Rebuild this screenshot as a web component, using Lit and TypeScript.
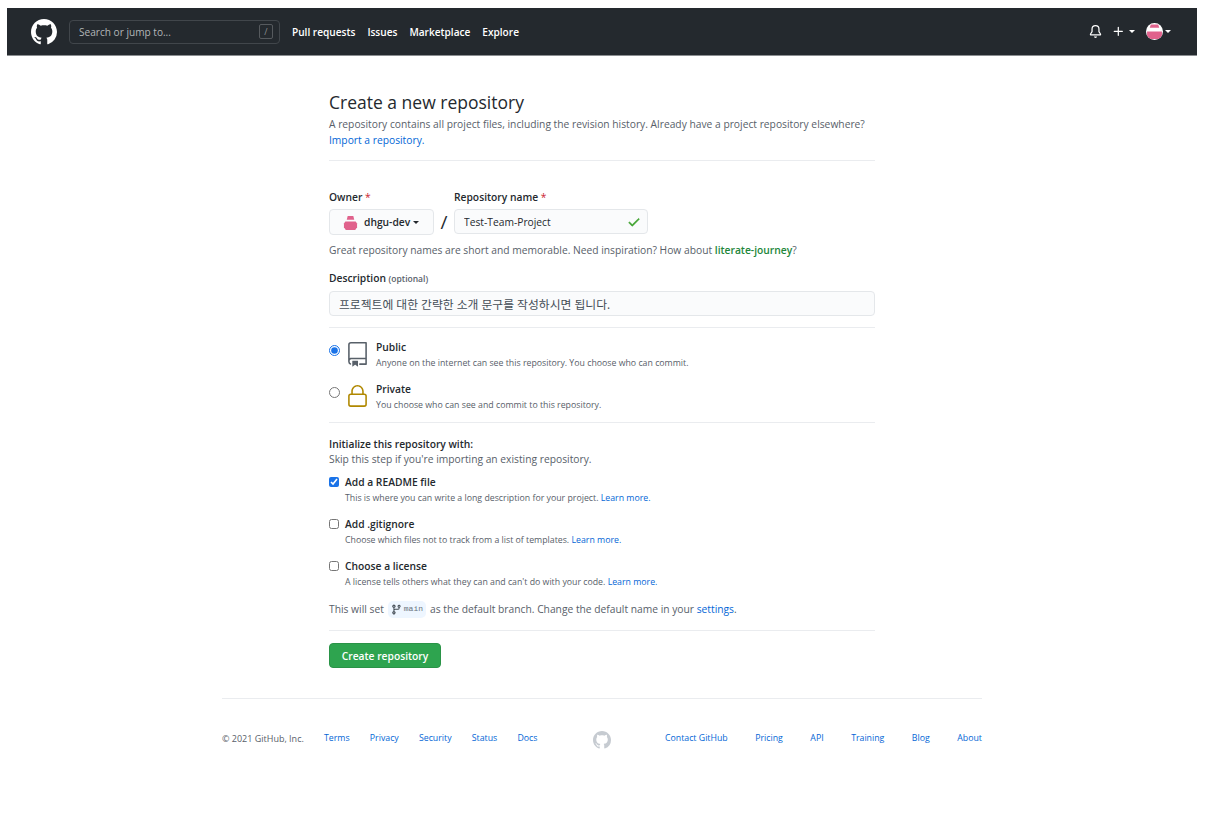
import { LitElement, html, css, svg } from "lit";
import { customElement } from "lit/decorators.js";

const MARK =
  "M8 0C3.58 0 0 3.58 0 8c0 3.54 2.29 6.53 5.47 7.59.4.07.55-.17.55-.38 0-.19-.01-.82-.01-1.49-2.01.37-2.53-.49-2.69-.94-.09-.23-.48-.94-.82-1.13-.28-.15-.68-.52-.01-.53.63-.01 1.08.58 1.23.82.72 1.21 1.87.87 2.33.66.07-.52.28-.87.51-1.07-1.78-.2-3.64-.89-3.64-3.95 0-.87.31-1.59.82-2.15-.08-.2-.36-1.02.08-2.12 0 0 .67-.21 2.2.82.64-.18 1.32-.27 2-.27.68 0 1.36.09 2 .27 1.53-1.04 2.2-.82 2.2-.82.44 1.1.16 1.92.08 2.12.51.56.82 1.27.82 2.15 0 3.07-1.87 3.75-3.65 3.95.29.25.54.73.54 1.48 0 1.07-.01 1.93-.01 2.2 0 .21.15.46.55.38A8.013 8.013 0 0016 8c0-4.42-3.58-8-8-8z";

const icon = (size: number, box: number, paths: string[], cls = "") => html`<svg
  class=${cls}
  width=${size}
  height=${size}
  viewBox="0 0 ${box} ${box}"
  fill="currentColor"
>
  ${paths.map((d) => svg`<path fill-rule="evenodd" d=${d}></path>`)}
</svg>`;

// the org's pink identicon, round in the header and bare next to the owner name
const headerAvatar = html`<svg class="round" width="17" height="17" viewBox="0 0 16 16">
  <rect width="16" height="16" fill="#fff"></rect>
  <path d="M4.5 1.5h7l1 3h-9z" fill="#e0628c"></path>
  <path d="M1 8h14v4l-2.5 3h-9L1 12z" fill="#e0628c"></path>
</svg>`;

const ownerAvatar = html`<svg width="15" height="15" viewBox="0 0 16 16">
  <path d="M5 1h6l1 4H4z" fill="#e0628c"></path>
  <path d="M2.5 7h11L15 9v4l-2 3H3l-2-3V9z" fill="#e0628c"></path>
</svg>`;

@customElement("app-root")
export class AppRoot extends LitElement {
  static styles = css`
    :host {
      display: block;
      padding: 8px 15px 0 7px;
      background: #fff;
      color: #24292e;
      font-family: "Open Sans", "Noto Sans CJK KR", sans-serif;
      font-size: 10.27px;
    }
    a {
      color: #0366d6;
      text-decoration: none;
    }
    svg {
      display: block;
      flex: none;
    }
    .round {
      border-radius: 50%;
    }

    .header {
      display: flex;
      align-items: center;
      height: 47px;
      padding: 0 24px;
      background: #24292e;
      border-bottom: 1px solid #8b8e91;
      color: #fff;
      font-size: 10.1px;
    }
    .search {
      display: flex;
      align-items: center;
      justify-content: space-between;
      box-sizing: border-box;
      width: 211px;
      height: 24px;
      margin: 0 12px;
      padding: 0 6px 0 9px;
      border: 1px solid #41464b;
      border-radius: 4px;
      color: #b3b6b8;
    }
    .slash {
      display: flex;
      align-items: center;
      justify-content: center;
      box-sizing: border-box;
      width: 14px;
      height: 15px;
      border: 1px solid #565a5e;
      border-radius: 2px;
      font-size: 9px;
      color: #8b8e91;
    }
    .nav {
      display: flex;
      gap: 12px;
      font-weight: 600;
    }
    .actions {
      display: flex;
      align-items: center;
      margin-left: auto;
      margin-right: 2px;
    }
    .caret {
      width: 0;
      height: 0;
      border: 3px solid transparent;
      border-top-color: currentColor;
      border-bottom-width: 0;
    }
    .plus {
      margin: 0 4px 0 10px;
    }
    .me {
      margin: 0 2px 0 11px;
    }

    .wrap {
      display: flex;
      flex-direction: column;
      align-items: center;
    }
    .main {
      width: 546px;
      padding-top: 34px;
    }
    h1 {
      margin: 0;
      font-size: 17.5px;
      line-height: 24px;
      font-weight: 400;
    }
    .muted {
      color: #586069;
    }
    .intro {
      margin: 2px 0 0;
      line-height: 16px;
    }
    hr {
      height: 1px;
      margin: 0;
      border: 0;
      background: #eaecef;
    }
    .intro + hr {
      margin-top: 12px;
    }
    .names {
      display: flex;
      align-items: flex-start;
      margin-top: 28px;
    }
    .label {
      display: block;
      font-weight: 600;
      line-height: 16px;
    }
    .req {
      color: #cb2431;
      font-weight: 400;
    }
    .field {
      display: flex;
      align-items: center;
      box-sizing: border-box;
      height: 25px;
      padding: 0 6px 0 9px;
      background: #fafbfc;
      border: 1px solid #e4e7ea;
      border-radius: 4px;
    }
    .field input {
      flex: 1;
      min-width: 0;
      padding: 0;
      border: 0;
      outline: 0;
      background: none;
      color: #24292e;
      font: inherit;
    }
    .desc .field input {
      font-size: 11.8px;
      color: #444d56;
    }
    .owner {
      display: flex;
      align-items: center;
      box-sizing: border-box;
      width: 105px;
      height: 26px;
      margin-top: 4px;
      padding-left: 13px;
      background: #fafbfc;
      border: 1px solid #e4e7ea;
      border-radius: 4px;
      font-weight: 600;
    }
    .owner span {
      margin: 0 3px 0 6px;
    }
    .sep {
      width: 20px;
      margin-top: 20px;
      font-size: 19px;
      line-height: 26px;
      text-align: center;
    }
    .repo .field {
      width: 194px;
      margin-top: 4px;
    }
    .ok {
      color: #3fa32f;
      stroke: currentColor;
      stroke-width: 0.6;
    }
    .hint {
      margin: 7px 0 0;
      line-height: 16px;
    }
    .hint b {
      color: #22863a;
      font-weight: 600;
    }
    .desc {
      margin-top: 12px;
    }
    .desc small {
      font-size: 8.5px;
      color: #586069;
    }
    .desc .field {
      margin-top: 4px;
    }
    .desc + hr {
      margin-top: 11px;
    }
    .vis {
      display: flex;
      align-items: flex-start;
      height: 34px;
      margin-top: 8px;
    }
    .vis.first {
      margin-top: 11px;
    }
    .vis input {
      width: 11px;
      height: 11px;
      margin: 6px 5px 0 0;
      accent-color: #1a73e8;
    }
    .vis svg {
      margin: 3px 6px 0 0;
      color: #586069;
    }
    .vis svg.gold {
      color: #b08800;
    }
    .vis + hr {
      margin-top: 7px;
    }
    .name {
      font-weight: 600;
      line-height: 16px;
    }
    .sub {
      margin-top: 1px;
      font-size: 8.78px;
      line-height: 14px;
      color: #586069;
    }
    .init {
      margin-top: 13px;
      font-weight: 600;
      line-height: 16px;
    }
    .opt {
      display: flex;
      align-items: flex-start;
      height: 31px;
      margin-top: 11px;
    }
    .opt.first {
      margin-top: 8px;
    }
    .opt input {
      width: 10px;
      height: 10px;
      margin: 3px 6px 0 0;
      accent-color: #1a73e8;
    }
    .branch {
      display: flex;
      align-items: center;
      height: 16px;
      margin-top: 12px;
      line-height: 16px;
    }
    .chip {
      display: flex;
      align-items: center;
      gap: 2px;
      margin: 0 4px;
      padding: 0 3px;
      height: 17px;
      background: #eef6ff;
      border-radius: 5px;
      color: #6a737d;
      font-family: "Liberation Mono", monospace;
      font-size: 8px;
    }
    .chip svg {
      color: #444d56;
    }
    .branch + hr {
      margin-top: 13px;
    }
    .create {
      display: flex;
      align-items: center;
      justify-content: center;
      box-sizing: border-box;
      width: 112px;
      height: 25px;
      margin-top: 12px;
      background: #2ea44f;
      border: 1px solid #2a9347;
      border-radius: 4px;
      color: #fff;
      font-weight: 600;
    }

    .footer {
      width: 760px;
      margin-top: 30px;
      border-top: 1px solid #eaecef;
      padding: 30px 0 64px;
      font-size: 8.78px;
    }
    .links {
      display: flex;
      align-items: center;
      height: 18px;
    }
    .left {
      display: flex;
      gap: 20.2px;
      width: 371px;
    }
    .copy {
      font-size: 9px;
      color: #586069;
    }
    .logo {
      margin-top: 4px;
      color: #c6cbd1;
    }
    .right {
      display: flex;
      justify-content: space-between;
      margin-left: auto;
      width: 317px;
    }
  `;

  render() {
    return html`
      <div class="header">
        ${icon(26, 16, [MARK])}
        <div class="search">
          <span>Search or jump to...</span>
          <span class="slash">/</span>
        </div>
        <nav class="nav">
          <span>Pull requests</span><span>Issues</span><span>Marketplace</span><span>Explore</span>
        </nav>
        <div class="actions">
          ${icon(13, 16, [
            "M8 16a2 2 0 001.985-1.75c.017-.137-.097-.25-.235-.25h-3.5c-.138 0-.252.113-.235.25A2 2 0 008 16z",
            "M8 1.5A3.5 3.5 0 004.5 5v2.947c0 .346-.102.683-.294.97l-1.703 2.556a.018.018 0 00-.003.01l.001.006c0 .002.002.004.004.006a.017.017 0 00.006.004l.007.001h10.964l.007-.001a.018.018 0 00.006-.004.016.016 0 00.004-.006l.001-.007a.017.017 0 00-.003-.01l-1.703-2.554a1.75 1.75 0 01-.294-.97V5A3.5 3.5 0 008 1.5zM3 5a5 5 0 0110 0v2.947c0 .05.015.098.042.139l1.703 2.555A1.518 1.518 0 0113.482 13H2.518a1.518 1.518 0 01-1.263-2.36l1.703-2.554A.25.25 0 003 7.947V5z",
          ])}
          ${icon(13, 16, [
            "M7.75 2a.75.75 0 01.75.75V7h4.25a.75.75 0 110 1.5H8.5v4.25a.75.75 0 11-1.5 0V8.5H2.75a.75.75 0 010-1.5H7V2.75A.75.75 0 017.75 2z",
          ], "plus")}
          <div class="caret"></div>
          <div class="me">${headerAvatar}</div>
          <div class="caret"></div>
        </div>
      </div>

      <div class="wrap">
        <main class="main">
          <h1>Create a new repository</h1>
          <p class="intro muted">
            A repository contains all project files, including the revision history. Already have a
            project repository elsewhere?<br />
            <a href="#">Import a repository.</a>
          </p>
          <hr />

          <div class="names">
            <div>
              <span class="label">Owner <span class="req">*</span></span>
              <div class="owner">${ownerAvatar}<span>dhgu-dev</span><div class="caret"></div></div>
            </div>
            <div class="sep">/</div>
            <div class="repo">
              <span class="label">Repository name <span class="req">*</span></span>
              <div class="field">
                <input value="Test-Team-Project" />
                ${icon(14, 16, [
                  "M13.78 4.22a.75.75 0 010 1.06l-7.25 7.25a.75.75 0 01-1.06 0L2.22 9.28a.75.75 0 011.06-1.06L6 10.94l6.72-6.72a.75.75 0 011.06 0z",
                ], "ok")}
              </div>
            </div>
          </div>
          <p class="hint muted">
            Great repository names are short and memorable. Need inspiration? How about
            <b>literate-journey</b>?
          </p>

          <div class="desc">
            <span class="label">Description <small>(optional)</small></span>
            <div class="field"><input value="프로젝트에 대한 간략한 소개 문구를 작성하시면 됩니다." /></div>
          </div>
          <hr />

          <div class="vis first">
            <input type="radio" name="vis" checked />
            ${icon(25, 24, [
              "M3 2.75A2.75 2.75 0 015.75 0h14.5a.75.75 0 01.75.75v20.5a.75.75 0 01-.75.75h-6a.75.75 0 010-1.5h5.25v-4H6A1.5 1.5 0 004.5 18v.75c0 .716.43 1.334 1.05 1.605a.75.75 0 01-.6 1.374A3.25 3.25 0 013 18.75v-16zM19.5 1.5V15H6c-.546 0-1.059.146-1.5.401V2.75c0-.69.56-1.25 1.25-1.25H19.5z",
              "M7 18.25a.25.25 0 01.25-.25h5a.25.25 0 01.25.25v5.01a.25.25 0 01-.397.201l-2.206-1.604a.25.25 0 00-.294 0L7.397 23.46a.25.25 0 01-.397-.2v-5.01z",
            ])}
            <div>
              <div class="name">Public</div>
              <div class="sub">Anyone on the internet can see this repository. You choose who can commit.</div>
            </div>
          </div>
          <div class="vis">
            <input type="radio" name="vis" />
            ${icon(25, 24, [
              "M6 9V7.25C6 3.845 8.503 1 12 1s6 2.845 6 6.25V9h.5a2.5 2.5 0 012.5 2.5v8a2.5 2.5 0 01-2.5 2.5h-13A2.5 2.5 0 013 19.5v-8A2.5 2.5 0 015.5 9H6zm1.5-1.75C7.5 4.58 9.422 2.5 12 2.5c2.578 0 4.5 2.08 4.5 4.75V9h-9V7.25zm-3 4.25a1 1 0 011-1h13a1 1 0 011 1v8a1 1 0 01-1 1h-13a1 1 0 01-1-1v-8z",
            ], "gold")}
            <div>
              <div class="name">Private</div>
              <div class="sub">You choose who can see and commit to this repository.</div>
            </div>
          </div>
          <hr />

          <div class="init">Initialize this repository with:</div>
          <div class="muted">Skip this step if you're importing an existing repository.</div>

          <div class="opt first">
            <input type="checkbox" checked />
            <div>
              <div class="name">Add a README file</div>
              <div class="sub">This is where you can write a long description for your project. <a href="#">Learn more.</a></div>
            </div>
          </div>
          <div class="opt">
            <input type="checkbox" />
            <div>
              <div class="name">Add .gitignore</div>
              <div class="sub">Choose which files not to track from a list of templates. <a href="#">Learn more.</a></div>
            </div>
          </div>
          <div class="opt">
            <input type="checkbox" />
            <div>
              <div class="name">Choose a license</div>
              <div class="sub">A license tells others what they can and can't do with your code. <a href="#">Learn more.</a></div>
            </div>
          </div>

          <div class="branch muted">
            <span>This will set</span>
            <span class="chip">
              ${icon(11, 16, [
                "M11.75 2.5a.75.75 0 100 1.5.75.75 0 000-1.5zm-2.25.75a2.25 2.25 0 113 2.122V6A2.5 2.5 0 0110 8.5H6a1 1 0 00-1 1v1.128a2.251 2.251 0 11-1.5 0V5.372a2.25 2.25 0 111.5 0v1.836A2.492 2.492 0 016 7h4a1 1 0 001-1v-.628A2.25 2.25 0 019.5 3.25zM4.25 12a.75.75 0 100 1.5.75.75 0 000-1.5zM3.5 3.25a.75.75 0 111.5 0 .75.75 0 01-1.5 0z",
              ])}
              <span>main</span>
            </span>
            <span>as the default branch. Change the default name in your <a href="#">settings</a>.</span>
          </div>
          <hr />
          <div class="create">Create repository</div>
        </main>

        <footer class="footer">
          <div class="links">
            <div class="left">
              <span class="copy">© 2021 GitHub, Inc.</span>
              <a href="#">Terms</a><a href="#">Privacy</a><a href="#">Security</a><a href="#">Status</a><a href="#">Docs</a>
            </div>
            <div class="logo">${icon(18, 16, [MARK])}</div>
            <div class="right">
              <a href="#">Contact GitHub</a><a href="#">Pricing</a><a href="#">API</a><a href="#">Training</a><a href="#">Blog</a><a href="#">About</a>
            </div>
          </div>
        </footer>
      </div>
    `;
  }
}
